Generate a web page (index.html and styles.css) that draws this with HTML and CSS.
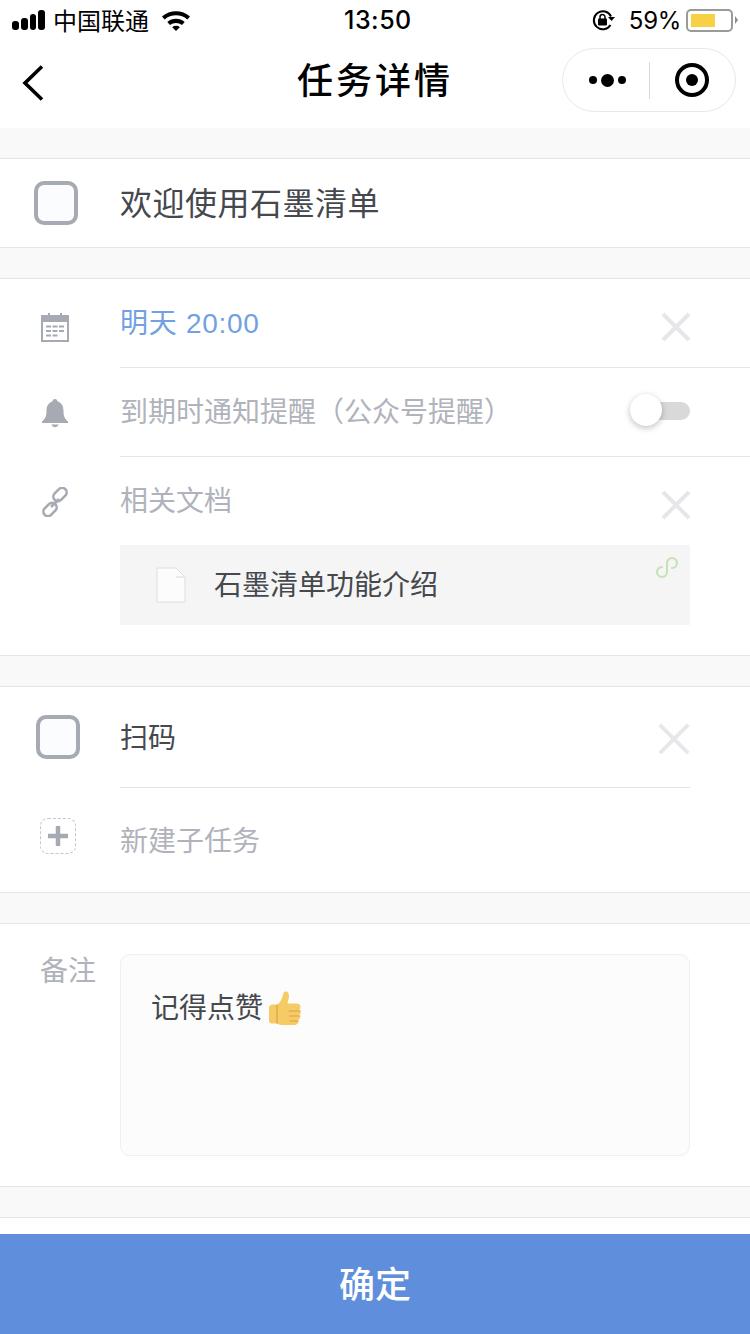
FILE: index.html
```html
<!DOCTYPE html>
<html lang="zh-CN">
<head>
    <meta charset="UTF-8">
    <meta name="viewport" content="width=device-width, initial-scale=1.0">
    <title>任务详情</title>
    <link rel="stylesheet" href="styles.css">
</head>
<body>
    <div class="page">
        <div class="status-bar">
            <div class="status-left">
                <div class="signal"><i></i><i></i><i></i><i></i></div>
                <span class="carrier">中国联通</span>
                <svg class="wifi" width="30" height="22" viewBox="0 0 30 22">
                    <path d="M1 7.500C8.800.6 21.200.6 29 7.500l-2.600 2.900C20 4.800 10 4.800 3.600 10.400z" fill="#000"/>
                    <path d="M6.300 13C11.200 8.700 18.800 8.700 23.700 13l-2.700 3C17.600 13.200 12.400 13.200 9 16z" fill="#000"/>
                    <path d="M11.200 18.200c2.200-1.800 5.400-1.800 7.600 0L15 22z" fill="#000"/>
                </svg>
            </div>
            <div class="status-time">13:50</div>
            <div class="status-right">
                <svg class="lock" width="24" height="22" viewBox="0 0 24 22">
                    <path d="M19 7.500A9 9 0 1 0 18.500 16" fill="none" stroke="#000" stroke-width="2"/>
                    <path d="M16 8h7l-3.500 4z" fill="#000"/>
                    <rect x="6" y="9.500" width="9" height="7" rx="1" fill="#000"/>
                    <path d="M8 10V8a2.500 2.500 0 0 1 5 0v2" fill="none" stroke="#000" stroke-width="1.500"/>
                </svg>
                <span class="percent">59%</span>
                <div class="battery"><div class="battery-level"></div></div>
                <div class="battery-cap"></div>
            </div>
        </div>

        <div class="nav-bar">
            <svg class="back" width="24" height="38" viewBox="0 0 24 38">
                <path d="M21 2.500L4 19l17 16.500" fill="none" stroke="#000" stroke-width="3.600"/>
            </svg>
            <div class="nav-title">任务详情</div>
            <div class="capsule">
                <div class="capsule-dots"><i></i><i class="big"></i><i></i></div>
                <div class="capsule-line"></div>
                <div class="capsule-target"><i></i></div>
            </div>
        </div>

        <div class="section title-section">
            <div class="checkbox"></div>
            <div class="task-title">欢迎使用石墨清单</div>
        </div>

        <div class="section info-section">
            <div class="row">
                <div class="row-icon">
                    <svg width="30" height="30" viewBox="0 0 30 30">
                        <path d="M8 1h2v3H8zM20 1h2v3h-2z" fill="#a6aab3"/>
                        <path d="M2 3h26a1 1 0 0 1 1 1v6H1V4a1 1 0 0 1 1-1z" fill="#a6aab3"/>
                        <rect x="2" y="4" width="26" height="25" fill="none" stroke="#a6aab3" stroke-width="2"/>
                        <path d="M6 14.500h5M12.500 14.500h5M19 14.500h5M6 19h5M12.500 19h5M19 19h5M6 23.500h5M12.500 23.500h5" stroke="#a6aab3" stroke-width="1.800"/>
                    </svg>
                </div>
                <div class="row-body">
                    <span class="date-text">明天 20:00</span>
                    <svg class="close" width="32" height="32" viewBox="0 0 32 32"><path d="M3 3l26 26M29 3L3 29" stroke="#e6e7ea" stroke-width="4"/></svg>
                </div>
            </div>
            <div class="row">
                <div class="row-icon icon-raised">
                    <svg width="28" height="30" viewBox="0 0 28 30">
                        <path d="M14 1c1.500 0 2.500 1 2.500 2.600C21 5 22.500 8.500 22.500 13c0 5 1 7.500 4.500 10.500V25H1v-1.500C4.500 20.500 5.500 18 5.500 13c0-4.500 1.500-8 6-9.400C11.500 2 12.500 1 14 1z" fill="#a6aab3"/>
                        <path d="M10.500 26.500h7c-.5 1.800-2 2.800-3.500 2.800s-3-1-3.500-2.800z" fill="#a6aab3"/>
                    </svg>
                </div>
                <div class="row-body">
                    <span class="muted">到期时通知提醒（公众号提醒）</span>
                    <div class="switch"><div class="switch-knob"></div></div>
                </div>
            </div>
            <div class="row row-last">
                <div class="row-icon icon-raised">
                    <svg width="28" height="30" viewBox="0 0 28 30">
                        <g fill="none" stroke="#a6aab3" stroke-width="2.600">
                            <rect x="11.500" y="3" width="15" height="9" rx="4.500" transform="rotate(-45 19 7.500)"/>
                            <rect x="1.500" y="18" width="15" height="9" rx="4.500" transform="rotate(-45 9 22.500)"/>
                            <path d="M10 20l8-8"/>
                        </g>
                    </svg>
                </div>
                <div class="row-body">
                    <span class="muted">相关文档</span>
                    <svg class="close" width="32" height="32" viewBox="0 0 32 32"><path d="M3 3l26 26M29 3L3 29" stroke="#e6e7ea" stroke-width="4"/></svg>
                </div>
            </div>
            <div class="doc-card">
                <svg class="doc-icon" width="30" height="36" viewBox="0 0 30 36">
                    <path d="M1 1h19l9 9v25H1z" fill="#fcfcfc" stroke="#dedede" stroke-width="1"/>
                    <path d="M20 10h8" stroke="#d8d8d8" stroke-width="1"/>
                </svg>
                <span class="doc-name">石墨清单功能介绍</span>
                <svg class="doc-mini" width="24" height="23" viewBox="-1 -1 24 23">
                    <path d="M6 10A5 5 0 1 0 11 15V6A5 5 0 1 1 16 11" fill="none" stroke="#c7e2b9" stroke-width="2.200" stroke-linecap="round"/>
                </svg>
            </div>
        </div>

        <div class="section sub-section">
            <div class="sub-row">
                <div class="checkbox checkbox-sub"></div>
                <div class="sub-body">
                    <span class="task-name">扫码</span>
                    <svg class="close" width="34" height="34" viewBox="0 0 36 36"><path d="M3 3l30 30M33 3L3 33" stroke="#e6e7ea" stroke-width="4"/></svg>
                </div>
            </div>
            <div class="new-row">
                <div class="add-box">
                    <svg width="22" height="22" viewBox="0 0 22 22"><path d="M11 1v20M1 11h20" stroke="#a6aab3" stroke-width="4.500"/></svg>
                </div>
                <span class="muted">新建子任务</span>
            </div>
        </div>

        <div class="section note-section">
            <div class="note-label">备注</div>
            <div class="note-box">
                <span>记得点赞</span>
                <svg class="thumb" width="36" height="36" viewBox="0 0 36 36">
                    <path d="M2 18c0-2 1.500-3.500 3.500-3.500h5c2.500-2 4-4.500 5-8 .5-2.500 1-5 3.500-5 3 0 3.500 4 2.500 8l-1 4h9c2.500 0 4 1.500 4 3.500 0 1.200-.5 2-1.300 2.600 1 .6 1.500 1.500 1.500 2.700 0 1.300-.7 2.200-1.700 2.800.7.500 1 1.300 1 2.200 0 1.300-.8 2.300-1.900 2.800.3.500.4 1 .4 1.500 0 1.700-1.500 3.400-3.500 3.400H15c-2.500 0-4-1-5.500-1.500h-4C3.500 34 2 32.500 2 30.500z" fill="#f6cb66"/>
                    <path d="M10 15v18M22 21h11M22.500 26h10.500M23 31h8" fill="none" stroke="#d9a443" stroke-width="1.200" stroke-linecap="round"/>
                </svg>
            </div>
        </div>

        <div class="bottom-line"></div>
        <div class="confirm">确定</div>
    </div>
</body>
</html>
```

FILE: styles.css
```css
* {
    box-sizing: border-box;
}

body {
    margin: 0;
    background-color: #f9f9f9;
    font-family: "Noto Sans CJK SC", "Liberation Sans", sans-serif;
    color: #45484d;
}

.page {
    display: flex;
    flex-direction: column;
    height: 1334px;
    overflow: hidden;
}

/* status bar */
.status-bar {
    display: flex;
    justify-content: space-between;
    align-items: center;
    height: 40px;
    padding: 0 11px 0 12px;
    background-color: #fff;
    color: #000;
    position: relative;
}

.status-left,
.status-right {
    display: flex;
    align-items: center;
}

.signal {
    display: flex;
    align-items: flex-end;
    gap: 2px;
    width: 33px;
}

.signal i {
    display: block;
    width: 7px;
    border-radius: 3px;
    background-color: #000;
}

.signal i:nth-child(1) { height: 9px; }
.signal i:nth-child(2) { height: 12px; }
.signal i:nth-child(3) { height: 16px; }
.signal i:nth-child(4) { height: 20px; }

.carrier {
    margin-left: 8px;
    font-size: 24px;
    line-height: 40px;
}

.wifi {
    margin-left: 12px;
}

.status-time {
    position: absolute;
    left: 344px;
    font-family: Inter, sans-serif;
    font-size: 25px;
    font-weight: 500;
    letter-spacing: 0.5px;
}

.lock {
    margin-right: 13px;
}

.percent {
    font-family: Inter, sans-serif;
    font-size: 24px;
    letter-spacing: -0.3px;
    margin-right: 5px;
}

.battery {
    width: 47px;
    height: 23px;
    padding: 3px;
    border: 2px solid #9a9a9a;
    border-radius: 5px;
}

.battery-level {
    width: 24px;
    height: 100%;
    background-color: #f8d045;
}

.battery-cap {
    width: 0;
    height: 0;
    margin-left: 2px;
    margin-right: 1px;
    border-left: 3px solid #8a8a8a;
    border-top: 4px solid transparent;
    border-bottom: 4px solid transparent;
}

/* nav */
.nav-bar {
    display: flex;
    align-items: center;
    justify-content: space-between;
    height: 88px;
    padding: 0 14px 0 21px;
    background-color: #fff;
    position: relative;
}

.back {
    margin-top: -2px;
}

.nav-title {
    position: absolute;
    left: 0;
    right: 0;
    top: 12px;
    text-align: center;
    font-size: 36px;
    font-weight: 500;
    line-height: 52px;
    letter-spacing: 3px;
    color: #000;
}

.capsule {
    display: flex;
    align-items: center;
    width: 174px;
    height: 64px;
    margin-bottom: 8px;
    border: 1px solid #e8e8e8;
    border-radius: 32px;
    background-color: #fff;
    position: relative;
}

.capsule-dots {
    display: flex;
    align-items: center;
    justify-content: center;
    gap: 4px;
    width: 86px;
    padding-left: 2px;
}

.capsule-dots i {
    display: block;
    width: 8px;
    height: 8px;
    border-radius: 50%;
    background-color: #000;
}

.capsule-dots i.big {
    width: 13px;
    height: 13px;
}

.capsule-line {
    width: 1px;
    height: 37px;
    background-color: #d8d8d8;
}

.capsule-target {
    display: flex;
    align-items: center;
    justify-content: center;
    width: 34px;
    height: 34px;
    margin-left: 25px;
    border: 4px solid #000;
    border-radius: 50%;
}

.capsule-target i {
    display: block;
    width: 12px;
    height: 12px;
    border-radius: 50%;
    background-color: #000;
}

/* sections */
.section {
    background-color: #fff;
    border-top: 1px solid #e5e5e5;
    border-bottom: 1px solid #e5e5e5;
}

.title-section {
    display: flex;
    align-items: center;
    height: 90px;
    margin-top: 30px;
    padding-left: 34px;
}

.checkbox {
    flex: none;
    width: 44px;
    height: 44px;
    border: 4px solid #a6aab3;
    border-radius: 10px;
    background-color: #fbfcfe;
}

.task-title {
    margin: 0 0 4px 42px;
    font-size: 32px;
    letter-spacing: 0.5px;
    line-height: 44px;
}

.info-section {
    height: 378px;
    margin-top: 30px;
}

.row {
    display: flex;
    height: 89px;
}

.row-icon {
    display: flex;
    justify-content: center;
    flex: none;
    width: 120px;
    padding: 33px 10px 0 0;
}

.icon-raised {
    padding-top: 30px;
}

.row-body {
    display: flex;
    justify-content: space-between;
    flex: 1;
    padding: 0 60px 0 0;
    border-bottom: 1px solid #e5e5e5;
    line-height: 84px;
    font-size: 28px;
}

.row-body .close {
    margin-top: 32px;
    margin-right: -2px;
}

.row-last .row-body {
    border-bottom: none;
}

.date-text {
    padding-top: 3px;
    font-family: "Liberation Sans", "Noto Sans CJK SC", sans-serif;
    color: #73a0e2;
    letter-spacing: 0.7px;
}

.muted {
    font-size: 28px;
    color: #b0b3bb;
}

.close {
    flex: none;
}

.switch {
    position: relative;
    width: 60px;
    height: 18px;
    margin-top: 34px;
    border-radius: 9px;
    background-color: #d9d9d9;
}

.switch-knob {
    position: absolute;
    left: 0;
    top: -8px;
    width: 32px;
    height: 32px;
    border-radius: 50%;
    background-color: #fff;
    box-shadow: 0 2px 6px rgba(0, 0, 0, 0.25);
}

.doc-card {
    display: flex;
    align-items: center;
    position: relative;
    width: 570px;
    height: 80px;
    margin: -1px 0 0 120px;
    padding-left: 36px;
    background-color: #f5f5f5;
}

.doc-name {
    margin: 0 0 4px 28px;
    font-size: 28px;
}

.doc-mini {
    position: absolute;
    right: 11px;
    top: 11px;
}

.sub-section {
    height: 207px;
    margin-top: 30px;
}

.sub-row {
    display: flex;
    height: 101px;
    padding-left: 36px;
}

.checkbox-sub {
    margin-top: 28px;
}

.sub-body {
    display: flex;
    justify-content: space-between;
    flex: 1;
    margin: 0 60px 0 40px;
    padding-top: 28px;
    border-bottom: 1px solid #e5e5e5;
    font-size: 28px;
    line-height: 42px;
}

.sub-body .close {
    margin-top: 7px;
    margin-right: -1px;
}

.new-row {
    display: flex;
    align-items: center;
    height: 104px;
    padding-left: 40px;
}

.new-row .muted {
    margin-bottom: 2px;
}

.add-box {
    display: flex;
    align-items: center;
    justify-content: center;
    width: 36px;
    height: 36px;
    margin-right: 44px;
    margin-bottom: 8px;
    border: 1px dashed #c4c6cc;
    border-radius: 8px;
}

.note-section {
    display: flex;
    align-items: flex-start;
    height: 264px;
    margin-top: 30px;
    padding: 30px 0 0 40px;
}

.note-label {
    width: 80px;
    font-size: 28px;
    line-height: 30px;
    color: #b0b3bb;
}

.note-box {
    display: flex;
    align-items: flex-start;
    width: 570px;
    height: 202px;
    padding: 34px 0 0 30px;
    border: 1px solid #efefef;
    border-radius: 10px;
    background-color: #fcfcfc;
    font-size: 28px;
    line-height: 34px;
}

.thumb {
    margin: 1px 0 0 4px;
}

.bottom-line {
    height: 17px;
    margin-top: 30px;
    background-color: #fff;
    border-top: 1px solid #e5e5e5;
}

.confirm {
    height: 100px;
    line-height: 96px;
    text-align: center;
    background-color: #5f8fdc;
    color: #fff;
    font-size: 36px;
    font-weight: 500;
    letter-spacing: 0;
}
```
